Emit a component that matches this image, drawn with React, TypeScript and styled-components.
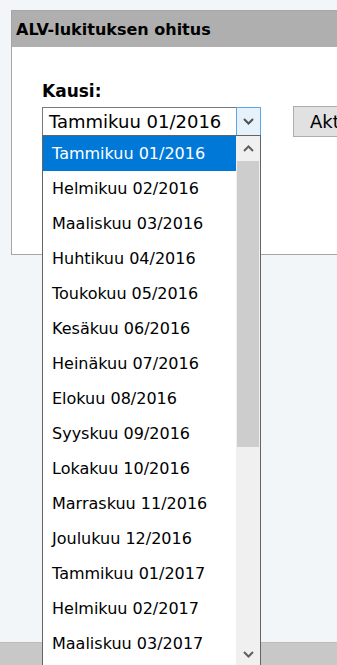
import React, { FC } from 'react';
import styled, { createGlobalStyle } from 'styled-components';

const GlobalStyle = createGlobalStyle`
  html, body {
    margin: 0;
    padding: 0;
    background: #f3f6f9;
    overflow: hidden;
  }
  body {
    font-family: "DejaVu Sans", Verdana, sans-serif;
    font-size: 16px;
    color: #000;
  }
`;

const periods = [
  'Tammikuu 01/2016',
  'Helmikuu 02/2016',
  'Maaliskuu 03/2016',
  'Huhtikuu 04/2016',
  'Toukokuu 05/2016',
  'Kesäkuu 06/2016',
  'Heinäkuu 07/2016',
  'Elokuu 08/2016',
  'Syyskuu 09/2016',
  'Lokakuu 10/2016',
  'Marraskuu 11/2016',
  'Joulukuu 12/2016',
  'Tammikuu 01/2017',
  'Helmikuu 02/2017',
  'Maaliskuu 03/2017',
];

const Page = styled.div`
  display: flex;
  flex-direction: column;
  min-height: 100vh;
  padding: 10px 0 0 11px;
  box-sizing: border-box;
`;

const Panel = styled.section`
  width: 440px;
  background: #fff;
  border: 1px solid #a6a6a6;
  border-right: none;
`;

const PanelHeader = styled.h2`
  margin: 0;
  height: 36px;
  display: flex;
  align-items: center;
  padding-left: 4px;
  background: #afafaf;
  font-size: 16px;
  font-weight: bold;
`;

const PanelBody = styled.div`
  padding: 35px 30px 117px;
`;

const Label = styled.div`
  font-weight: bold;
  font-size: 17px;
  line-height: 19px;
  margin-bottom: 6px;
`;

const Row = styled.div`
  display: flex;
  align-items: flex-start;
  gap: 32px;
`;

const SelectWrap = styled.div`
  position: relative;
  flex: 0 0 219px;
`;

const SelectBox = styled.div`
  display: flex;
  height: 29px;
  box-sizing: border-box;
  border: 1px solid #7a7a7a;
  background: #fff;
`;

const SelectValue = styled.div`
  flex: 1;
  min-width: 0;
  padding-left: 6px;
  font-size: 18px;
  line-height: 27px;
  white-space: nowrap;
  overflow: hidden;
`;

const ArrowButton = styled.div`
  flex: 0 0 25px;
  box-sizing: border-box;
  margin: -1px -1px -1px 0;
  border: 1px solid #5ea6e6;
  background: #e5f1fb;
  display: flex;
  align-items: center;
  justify-content: center;
`;

const ActionButton = styled.button`
  flex-shrink: 0;
  height: 31px;
  padding: 0 16px;
  margin-top: -1px;
  border: 1px solid #adadad;
  background: #e1e1e1;
  font-family: inherit;
  font-size: 18px;
  white-space: nowrap;
`;

const ListBox = styled.div`
  position: absolute;
  top: 28px;
  left: 0;
  width: 219px;
  height: 533px;
  box-sizing: border-box;
  border: 1px solid #646464;
  background: #fff;
  display: flex;
  overflow: hidden;
  z-index: 2;
`;

const Options = styled.div`
  flex: 1;
`;

const Option = styled.div<{ $selected?: boolean }>`
  height: 35px;
  line-height: 35px;
  padding-left: 9px;
  white-space: nowrap;
  background: ${p => (p.$selected ? '#0078d7' : 'transparent')};
  color: ${p => (p.$selected ? '#fff' : '#000')};
`;

const ScrollBar = styled.div`
  width: 24px;
  background: #f0f0f0;
  display: flex;
  flex-direction: column;
  align-items: center;
`;

const ScrollArrow = styled.div`
  height: 25px;
  display: flex;
  align-items: center;
  justify-content: center;
`;

const Thumb = styled.div`
  width: 22px;
  height: 286px;
  background: #cdcdcd;
`;

const Track = styled.div`
  flex: 1;
`;

const Footer = styled.footer`
  margin-top: auto;
  margin-left: -11px;
  height: 22px;
  background: #c8c8c8;
  border-top: 1px solid #bdbdbd;
`;

const Chevron: FC<{ up?: boolean; color?: string }> = ({ up, color = '#606060' }) => (
  <svg width="11" height="7" viewBox="0 0 11 7">
    <path
      d={up ? 'M1 6 L5.5 1.5 L10 6' : 'M1 1 L5.5 5.5 L10 1'}
      fill="none"
      stroke={color}
      strokeWidth="2"
    />
  </svg>
);

const App: FC = () => (
  <>
    <GlobalStyle />
    <Page>
      <Panel>
        <PanelHeader>ALV-lukituksen ohitus</PanelHeader>
        <PanelBody>
          <Label>Kausi:</Label>
          <Row>
            <SelectWrap>
              <SelectBox>
                <SelectValue>{periods[0]}</SelectValue>
                <ArrowButton>
                  <Chevron color="#505050" />
                </ArrowButton>
              </SelectBox>
              <ListBox>
                <Options>
                  {periods.map((p, i) => (
                    <Option key={p} $selected={i === 0}>
                      {p}
                    </Option>
                  ))}
                </Options>
                <ScrollBar>
                  <ScrollArrow>
                    <Chevron up />
                  </ScrollArrow>
                  <Thumb />
                  <Track />
                  <ScrollArrow>
                    <Chevron />
                  </ScrollArrow>
                </ScrollBar>
              </ListBox>
            </SelectWrap>
            <ActionButton>Aktivoi</ActionButton>
          </Row>
        </PanelBody>
      </Panel>
      <Footer />
    </Page>
  </>
);

export default App;
